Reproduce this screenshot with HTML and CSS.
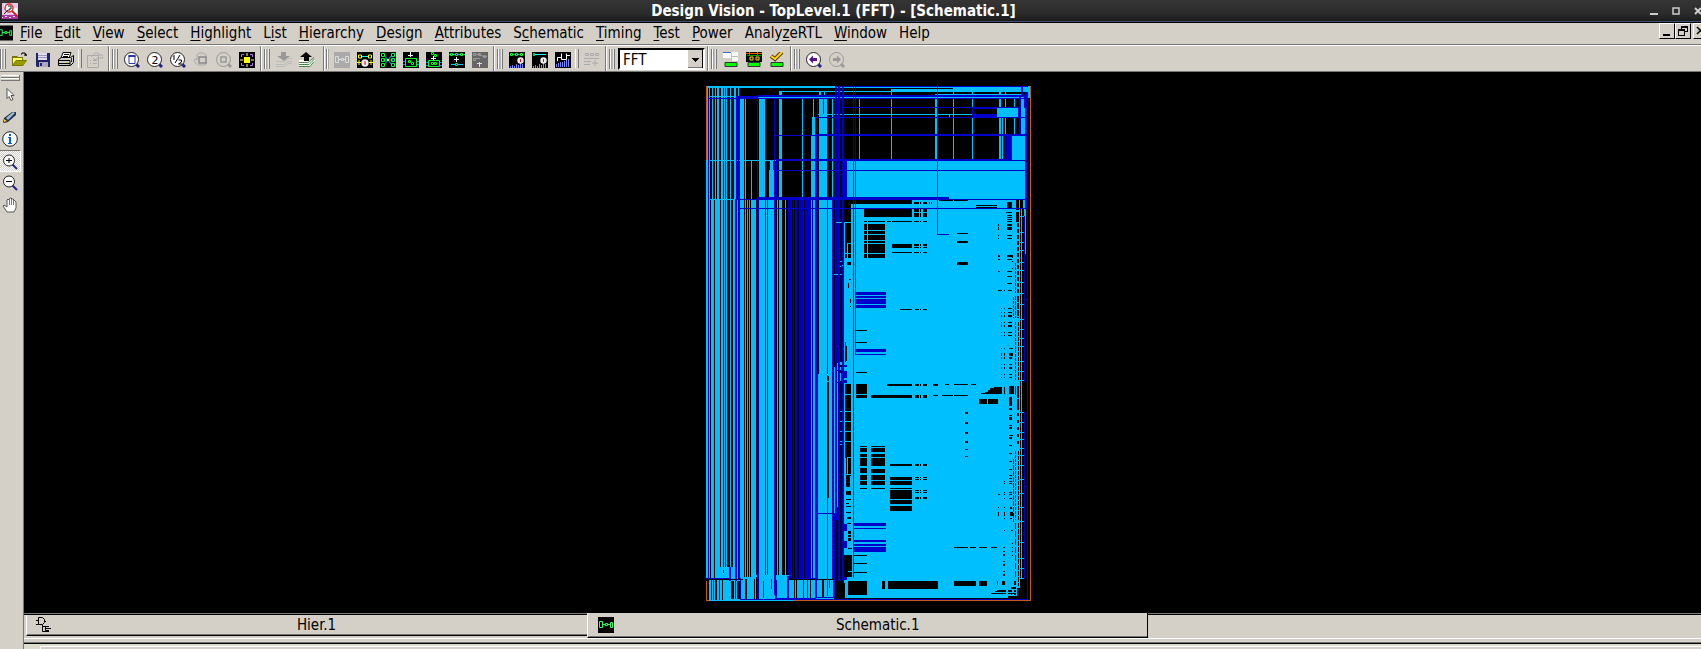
FILE: index.html
```html
<!DOCTYPE html>
<html lang="en">
<head>
<meta charset="utf-8">
<title>Design Vision - TopLevel.1 (FFT) - [Schematic.1]</title>
<link rel="stylesheet" href="styles.css">
</head>
<body>
<svg class="defs" aria-hidden="true">
  <symbol id="lens" viewBox="0 0 16 16"><path d="M11 11l4 4" stroke="#228" stroke-width="3"/><circle cx="7.5" cy="7.5" r="7" fill="#fff" stroke="#222"/></symbol>
  <symbol id="lens-off" viewBox="0 0 16 16"><path d="M12 12l3 3" stroke="#999" stroke-width="3"/><circle cx="7.5" cy="7.5" r="7" fill="none" stroke="#999"/></symbol>
  <symbol id="sch" viewBox="0 0 16 16"><path d="M0 0h16v16H0z"/><path d="M1.5 4.5h3v6h-3zM12.500 5.500h2v5h-2zM7.500 6.500h2v2h-2zM4.500 7.500h3m2 0h3" fill="none" stroke="#3f5"/></symbol>
  <symbol id="dial" viewBox="0 0 7 7"><circle cx="3.500" cy="3.500" r="3.200" fill="#eee"/><path d="M3 2h1v3H3z" fill="#d11"/></symbol>
  <symbol id="bars" viewBox="0 0 16 6"><path d="M1.500 6V4m2 2V3m2 3V4m2 2V2m2 4V3m2 3V1m2 5V2" stroke="#78f" fill="none"/></symbol>
</svg>

<header class="titlebar">
  <svg class="app-icon" viewBox="0 0 16 16"><path d="M0 0h16v16H0z" fill="#e8c8e8"/><path d="M0 12h16v4H0z" fill="#a3a"/><path d="M0 14h1v1H0zm3-1h2v1H3zm4 1h2v1H7zm4-1h2v1h-2z" fill="#fff"/><path d="M2 2h4v3H2zm8 3h5v6h-5z" fill="#fff"/><circle cx="7" cy="5" r="4" fill="#fff" stroke="#d33" stroke-width="1.500"/><path d="M10 8l5 5" stroke="#c22" stroke-width="2"/><path d="M6 3h3v3H7v2M2 11l4-4" fill="none" stroke="#222"/></svg>
  <h1>Design Vision - TopLevel.1 (FFT) - [Schematic.1]</h1>
  <div class="window-controls">
    <button aria-label="Minimize"><svg viewBox="0 0 10 10"><path d="M1 7h8v2H1z" fill="#ccc"/></svg></button>
    <button aria-label="Maximize"><svg viewBox="0 0 10 10"><path d="M2 2h6v6H2z" fill="none" stroke="#ccc" stroke-width="1.500"/></svg></button>
    <button aria-label="Close"><svg viewBox="0 0 10 10"><path d="M2 2l6 6m0-6l-6 6" stroke="#ccc" stroke-width="2"/></svg></button>
  </div>
</header>

<nav class="menubar">
  <svg class="doc-icon"><use href="#sch"/></svg>
  <button><u>F</u>ile</button><button><u>E</u>dit</button><button><u>V</u>iew</button><button><u>S</u>elect</button><button><u>H</u>ighlight</button><button>L<u>i</u>st</button><button><u>H</u>ierarchy</button><button><u>D</u>esign</button><button><u>A</u>ttributes</button><button>S<u>c</u>hematic</button><button><u>T</u>iming</button><button><u>T</u>est</button><button><u>P</u>ower</button><button>Analy<u>z</u>eRTL</button><button><u>W</u>indow</button><button>Help</button>
  <div class="mdi-controls">
    <button aria-label="Minimize document"><svg viewBox="0 0 12 12"><path d="M2 9h7v2H2z"/></svg></button>
    <button aria-label="Restore document"><svg viewBox="0 0 12 12"><path d="M4 1h7v6H8V6h2V3H5v1H4zM1 4h7v7H1zM2 6v4h5V6z" fill-rule="evenodd"/></svg></button>
    <button aria-label="Close document" class="mdi-close"><svg viewBox="0 0 12 12"><path d="M2 2l7 7m0-7l-7 7" stroke="#000" stroke-width="1.500"/></svg></button>
  </div>
</nav>

<div class="toolbar">
  <div class="group first">
    <i class="grip"></i>
    <button aria-label="Open"><svg viewBox="0 0 16 16"><path d="M0 4h5l1 1h5v3h4l-4 6H0z" fill="#770"/><path d="M1 6h9v2H4l-3 4z" fill="#ff6"/><path d="M4 9h11l-4 4H1z" fill="#990"/><path d="M9 2h1V1h3v1h1v2m-2-1h3" fill="none" stroke="#000"/></svg></button>
    <button aria-label="Save"><svg viewBox="0 0 16 16"><path d="M1 1h14v14H2l-1-1z" fill="#226"/><path d="M3 1h9v7H3z" fill="#dde"/><path d="M3 3h9v1H3zm0 2h9v1H3z" fill="#99b"/><path d="M4 10h9v5H4z" fill="#aab"/><path d="M5 11h2v3H5z" fill="#226"/></svg></button>
    <button aria-label="Print"><svg viewBox="0 0 16 16"><path d="M5 .5h8L11 6H3z" fill="#fff" stroke="#000"/><path d="M6 2.500h5M5 4.500h5" stroke="#000"/><path d="M.5 7.500l3-2h9l3-2v7l-3 3H.5z" fill="#ccc" stroke="#000"/><path d="M1 8.500h11M1 11.500h11m0-3v5" stroke="#000"/><path d="M8 10h2v1H8z" fill="#dd0"/><path d="M13 6h1v4h-1z" fill="#222"/></svg></button>
    <i class="sep"></i>
    <button aria-label="Properties" disabled><svg viewBox="0 0 16 16"><path d="M.5 3.500h11v12H.5zM3 8.500h1m2 0h4M3 11.500h1m2 0h4M4 5l4-4h3l1 2h4v3h-5L8 8 6 6" fill="none" stroke="#aaa"/></svg></button>
  </div>
  <div class="group">
    <i class="grip"></i>
    <button aria-label="Zoom full"><svg viewBox="0 0 16 16"><use href="#lens"/><path d="M5 3.500h6v8H5z" fill="#fff" stroke="#33a"/><path d="M4.500 3h7v2h-7z" fill="#33a"/></svg></button>
    <button aria-label="Zoom in 2x"><svg viewBox="0 0 16 16"><use href="#lens"/><text x="4.500" y="11.500" class="glyph">2</text></svg></button>
    <button aria-label="Zoom out 2x"><svg viewBox="0 0 16 16"><use href="#lens"/><path d="M3 4.500l1-1V8m1 3l5-8M8.500 8h3v2l-3 2h3.500" fill="none" stroke="#000"/></svg></button>
    <button aria-label="Pan" disabled><svg viewBox="0 0 16 16"><path d="M4 13L1 8l2-1 1 1V3l2-2 4 0 3 2v2M5 13h7l2-3" fill="none" stroke="#aaa"/><path d="M6 5h7v6H6z" fill="none" stroke="#888" stroke-width="1.500"/></svg></button>
    <button aria-label="Zoom selection" disabled><svg viewBox="0 0 16 16"><use href="#lens-off"/><path d="M5 5h5v5H5z" fill="none" stroke="#999" stroke-width="1.500"/></svg></button>
    <button aria-label="Zoom highlight"><svg viewBox="0 0 16 16"><path d="M0 0h16v16H0z"/><path d="M5 5h6v6H5z" fill="#ff0"/><path d="M2.500 5V2.500H5m6 0h2.500V5m0 6v2.500H11m-6 0H2.500V11" stroke="#b7e" fill="none"/><path d="M8 1v3m0 8v3M1 8h3m8 0h3" stroke="#ff8"/></svg></button>
  </div>
  <div class="group short">
    <i class="grip"></i>
    <button aria-label="Push down" disabled><svg viewBox="0 0 16 16"><path d="M5 0h5v4h4L8 9 1 4h4z" fill="#999"/><path d="M0 9.500h8l5-3h3M0 12.500h8l5-3h3M0 14.500h8l5-3h3" stroke="#bbb" fill="none"/></svg></button>
    <button aria-label="Pop up"><svg viewBox="0 0 16 16"><path d="M0 8h16v1l-5 6H0z" fill="#fff"/><path d="M5 9V5H1l6-5 6 5h-3v4z"/><path d="M0 10.500h9l6-5M0 12.500h10l5-5M0 14.500h11l4-5" stroke="#484" fill="none"/></svg></button>
  </div>
  <div class="group thin">
    <i class="grip"></i>
    <button aria-label="Schematic view" disabled><svg viewBox="0 0 16 16"><path d="M0 0h16v16H0z" fill="#aaa"/><path d="M1.500 4.500h3v6h-3zM11.500 4.500h3v6h-3zM7.500 6.500h2v2h-2zM4.500 7.500h3m2 0h2" fill="none" stroke="#ddd"/></svg></button>
    <button aria-label="Path schematic"><svg viewBox="0 0 16 16"><path d="M0 0h16v16H0z"/><path d="M4 4.500h8" stroke="#0ff"/><path d="M1.500 3h3v3h-3zm10 0h3v3h-3z" fill="none" stroke="#ff0"/><path d="M0 10.500h4m8 0h4M2 8v5m12-5v5" stroke="#ff0"/><use href="#dial" x="4" y="7" width="8" height="8"/></svg></button>
    <button aria-label="Fan-in and fan-out"><svg viewBox="0 0 16 16"><path d="M0 0h16v16H0z"/><path d="M4 3l8 10M4 13l8-10M3 8h10" stroke="#0bf"/><path d="M1.500 1.500h3v3h-3zm0 5h3v3h-3zm0 5h3v3h-3zm10-10h3v3h-3zm0 5h3v3h-3zm0 5h3v3h-3z" fill="none" stroke="#0f4"/><path d="M7 7h2v2H7z" fill="#ff0"/></svg></button>
    <button aria-label="Add logic inside"><svg viewBox="0 0 16 16"><path d="M0 0h16v16H0z"/><path d="M0 9.500h3m10 0h3M0 12.500h3m10 0h3" stroke="#08f"/><path d="M2.500 6.500h11v8h-11zM5.500 8.500h2v2h-2zm3 2h2v2h-2z" fill="none" stroke="#0f2"/><path d="M7 0h1v5H7zM5 3h5v1H5z" fill="#fff"/></svg></button>
    <button aria-label="Add hierarchy"><svg viewBox="0 0 16 16"><path d="M0 0h16v16H0z"/><path d="M0 10.500h3m10 0h3M0 13.500h3m10 0h3" stroke="#08f"/><path d="M5.500.5h2v2h-2zm3 2h2v2h-2zM2.500 8.500h11v6h-11zM5.500 10.500h2v2h-2zm3 0h2v2h-2z" fill="none" stroke="#0f2"/><path d="M7 4h1v4H7zM5 6h5v1H5z" fill="#fff"/></svg></button>
    <button aria-label="Expand path"><svg viewBox="0 0 16 16"><path d="M0 0h16v16H0z"/><path d="M0 2.500h16M2 12.500h12" stroke="#0cf"/><path d="M1.500 1.500h2v2h-2zm5 0h2v2h-2zm5 0h2v2h-2zm-5 10h2v2h-2z" stroke="#0f2"/><path d="M7 5h1v5H7zM5 7h5v1H5z" fill="#fff"/></svg></button>
    <button aria-label="Collapse path" disabled><svg viewBox="0 0 16 16"><path d="M0 0h16v16H0z" fill="#666"/><path d="M3 2.500h5l3 2h4M3 6.500h5M1.500 1.500h2v2h-2zm5 0h2v2h-2zm5 2h2v2h-2zm-10 3h2v2h-2z" fill="none" stroke="#999"/><path d="M7 10h1v5H7zM5 11h5v1H5z" fill="#ddd"/></svg></button>
  </div>
  <div class="group">
    <i class="grip"></i>
    <button aria-label="Path slack"><svg viewBox="0 0 16 16"><path d="M0 0h16v16H0z"/><path d="M2 2.500h12" stroke="#0c8"/><path d="M1.500 1.500h2v2h-2zm5 0h2v2h-2zm5 0h2v2h-2z" stroke="#0f2"/><use href="#bars" y="10" width="16" height="6"/><use href="#dial" x="8" y="5" width="7" height="7"/></svg></button>
    <button aria-label="Net capacitance"><svg viewBox="0 0 16 16"><path d="M0 0h16v16H0z"/><path d="M2 2.500h12" stroke="#0ff"/><path d="M1 1h2v3H1z" fill="#0c4"/><use href="#bars" y="10" width="16" height="6"/><use href="#dial" x="8" y="5" width="7" height="7"/></svg></button>
    <button aria-label="Endpoint slack"><svg viewBox="0 0 16 16"><path d="M0 0h16v16H0z"/><path d="M2.500 9V5.500h4v-4m0 2v4h5v-6m0 2H15" fill="none" stroke="#fff"/><path d="M1.500 15v-3m2 3v-4m2 4v-5m2 5v-5m2 5V9m2 6V8m2 7V7" stroke="#78f"/></svg></button>
    <i class="sep"></i>
    <button aria-label="Timing report" disabled><svg viewBox="0 0 16 16"><path d="M1.500 1.500h3v2h-3zm5 0h3v2h-3zm5 0h3v2h-3zM0 6.500h15M0 9.500h7M0 12.500h6M11 8v6m-3-3h6" fill="none" stroke="#aaa"/></svg></button>
  </div>
  <div class="group wide">
    <i class="grip"></i>
    <select class="design" aria-label="Design"><option>FFT</option></select>
  </div>
  <div class="group">
    <i class="grip"></i>
    <button aria-label="Layout view"><svg viewBox="0 0 16 16"><path d="M0 0h8v6H0zm8 0h7v9H9V5z" fill="#fff"/><path d="M0 0h8v1H0z" fill="#36d"/><path d="M9 4.500h6M8.500 1v8" stroke="#bbb"/><path d="M2 10.500h12v4H2z" fill="#0f0" stroke="#333"/></svg></button>
    <button aria-label="Layout nets"><svg viewBox="0 0 16 16"><path d="M0 0h16v10H0z"/><path d="M0 1.500h16M3.500 0v3m8-3v3" stroke="#e50"/><path d="M1 3.500h14" stroke="#090"/><path d="M4 5h3v3H4zm6 0h3v3h-3z" fill="none" stroke="#fd0"/><path d="M2 10.500h12v4H2z" fill="#0f0" stroke="#333"/></svg></button>
    <button aria-label="Check design"><svg viewBox="0 0 16 16"><path d="M2 4l4 3 7-7" fill="none" stroke="#630" stroke-width="4"/><path d="M2 4l4 3 7-7" fill="none" stroke="#fd0" stroke-width="2"/><path d="M2 10.500h12v4H2z" fill="#0f0" stroke="#333"/></svg></button>
  </div>
  <div class="group last">
    <i class="grip"></i>
    <button aria-label="Back"><svg viewBox="0 0 16 16"><use href="#lens"/><path d="M3 7.500l4-4V6h4v3H7v2.500z" fill="#518"/></svg></button>
    <button aria-label="Forward" disabled><svg viewBox="0 0 16 16"><use href="#lens-off"/><path d="M12 7.500l-4-4V6H4v3h4v2.500z" fill="#999"/></svg></button>
  </div>
</div>

<main class="workspace">
  <aside class="tools">
    <i class="grip-h"></i>
    <button aria-label="Select"><svg viewBox="0 0 16 16"><path d="M5 1.500v10l2-2 2 4 2-1-2-4h3z" fill="#fff" stroke="#555"/></svg></button>
    <button aria-label="Highlight"><svg viewBox="0 0 16 16"><path d="M1 13l1-4 8-6h4v3l-8 7-4 1z" fill="#234"/><path d="M4 9l7-6 2 1-7 7z" fill="#9bd"/><path d="M2 10l3 2-3 1z" fill="#fc3"/></svg></button>
    <button aria-label="Information"><svg viewBox="0 0 16 16"><circle cx="8" cy="8" r="7.300" fill="#fff" stroke="#222"/><path d="M7 3h2v2H7zM6 6h3v6h1v1H6v-1h1V7H6z" fill="#06c"/></svg></button>
    <button aria-label="Zoom in" class="active"><svg viewBox="0 0 16 16"><path d="M10 10l5 5" stroke="#228" stroke-width="2"/><circle cx="7" cy="6.500" r="5.500" fill="#fff" stroke="#222"/><path d="M4 6.500h6M7 4v5" stroke="#000"/></svg></button>
    <button aria-label="Zoom out"><svg viewBox="0 0 16 16"><path d="M10 10l5 5" stroke="#228" stroke-width="2"/><circle cx="7" cy="6.500" r="5.500" fill="#fff" stroke="#222"/><path d="M4 6.500h6" stroke="#000"/></svg></button>
    <button aria-label="Pan"><svg viewBox="0 0 16 16"><path d="M5 15L1 9l1-1 3 2V3l1-1 1 1 1-2h1l1 1 1 0 1 1 1 1 1 1v6l-2 4z" fill="#fff" stroke="#555"/><path d="M7.500 3v5m2-6v6m2-5v5" stroke="#777"/></svg></button>
  </aside>
  <section class="content">
    <div class="canvas"><svg id="schematic" class="schematic" viewBox="6 6 325 515" role="img" aria-label="FFT schematic"></svg></div>
    <div class="tabs">
      <button class="tab"><svg viewBox="0 0 16 16"><path d="M0 3.500h2m-2 4h2M2.500.5h4l2 2v3l-2 2h-4zM8 4.500h2M6.500 8v6.500H13M6.500 9.500H13M9.500 9.500v4H13M10 11.500h5" fill="none" stroke="#000"/></svg><span>Hier.1</span></button>
      <button class="tab current"><svg><use href="#sch"/></svg><span>Schematic.1</span></button>
      <div class="tab-rest"></div>
    </div>
    <footer class="status"><div class="status-panel"></div></footer>
  </section>
</main>
<script src="schematic.js"></script>
</body>
</html>
```

FILE: styles.css
```css
* { box-sizing: border-box; }

body {
  margin: 0;
  height: 100vh;
  display: flex;
  flex-direction: column;
  overflow: hidden;
  background: #d4d0c8;
  color: #000;
  font: 15px/20px "DejaVu Sans Condensed", "DejaVu Sans", sans-serif;
}

button {
  flex: none;
  margin: 0;
  padding: 0;
  border: 0;
  background: none;
  color: inherit;
  font: inherit;
}

svg { display: block; flex: none; width: 16px; height: 16px; }
.defs { position: absolute; width: 0; height: 0; }
.glyph { font: 11px "DejaVu Sans", sans-serif; }

.titlebar {
  flex: none;
  height: 23px;
  display: flex;
  align-items: center;
  padding-left: 2px;
  background: linear-gradient(#353535, #2c2c2c 60%, #1a1a1a);
  border-bottom: 1px solid #000;
  box-shadow: inset 0 -1px #3c5070;
}
.titlebar h1 {
  flex: 1;
  margin: 0;
  text-align: center;
  color: #fff;
  font: bold 15px/20px "DejaVu Sans Condensed", "DejaVu Sans", sans-serif;
}
.window-controls { display: flex; gap: 12px; margin-right: -2px; }
.window-controls svg { width: 10px; height: 10px; }

.menubar {
  flex: none;
  height: 22px;
  display: flex;
  align-items: flex-start;
  gap: 12px;
  border-bottom: 1px solid #777;
}
.menubar u { text-underline-offset: 2px; text-decoration-thickness: 1px; }
.doc-icon { width: 15px; height: 16px; margin: 2px -5px 0 -2px; }
.mdi-controls { display: flex; margin-left: auto; margin-right: -8px; }
.mdi-controls button {
  width: 16px;
  height: 16px;
  padding: 1px;
  border: 1px solid #000;
  border-top-color: #fff;
  border-left-color: #fff;
}
.mdi-controls svg { width: 12px; height: 12px; }
.mdi-controls .mdi-close { margin-left: 2px; }

.toolbar {
  flex: none;
  height: 27px;
  display: flex;
  border-top: 1px solid #fff;
  border-bottom: 1px solid #777;
}
.group {
  display: flex;
  align-items: center;
  padding: 0 1px 0 2px;
  border-left: 1px solid #fff;
  border-right: 1px solid #777;
}
.group.first { padding-left: 0; border-left: 0; }
.group.short { padding-right: 4px; }
.group.thin { padding-left: 1px; }
.group.wide { padding-right: 2px; }
.group.thin .grip { width: 3px; margin-right: 2px; border-right: 0; }
.group.last { border-right: 0; }
.group button { width: 23px; padding: 2px 4px 0 3px; }
.grip {
  width: 6px;
  height: 20px;
  margin-right: 3px;
  border: solid #777;
  border-width: 0 1px;
  background: linear-gradient(90deg, #fff 1px, #d4d0c8 1px, #777 2px, #fff 3px, #d4d0c8 4px);
}
.sep { width: 6px; height: 19px; border-left: 1px solid #fff; box-shadow: inset 2px 0 #d4d0c8, inset 3px 0 #777; }
.design {
  appearance: none;
  width: 87px;
  height: 22px;
  padding: 0 3px;
  border: 2px solid #fff;
  border-top-color: #000;
  border-left-color: #000;
  border-radius: 0;
  color: #000;
  font: inherit;
  background:
    linear-gradient(#000, #000) right 7px top 11px / 1px 1px no-repeat,
    linear-gradient(#000, #000) right 6px top 10px / 3px 1px no-repeat,
    linear-gradient(#000, #000) right 5px top 9px / 5px 1px no-repeat,
    linear-gradient(#000, #000) right 4px top 8px / 7px 1px no-repeat,
    linear-gradient(#000, #000) right / 1px 100% no-repeat,
    linear-gradient(#777, #777) bottom right / 15px 1px no-repeat,
    linear-gradient(#d4d0c8, #d4d0c8) right / 15px 100% no-repeat,
    #fff;
}

.workspace { flex: 1; min-height: 0; display: flex; }
.tools {
  flex: none;
  width: 24px;
  padding-top: 3px;
  border-right: 1px solid #777;
}
.grip-h {
  display: block;
  width: 19px;
  height: 6px;
  margin: 0 0 3px 1px;
  border: solid #777;
  border-width: 0 1px 1px 0;
  background: linear-gradient(#fff 1px, #d4d0c8 1px, #d4d0c8 2px, #777 2px, #777 3px, #fff 3px, #fff 4px, #d4d0c8 4px);
}
.tools button { display: block; width: 21px; height: 22px; padding: 3px 3px 3px 2px; }
.tools .active {
  border-top: 1px solid #777;
  border-bottom: 1px solid #fff;
  border-right: 1px solid #fff;
  padding: 3px 2px 1px;
  background: repeating-conic-gradient(#fff 0 25%, #d4d0c8 0 50%) 0 0 / 2px 2px;
}

.content { flex: 1; min-width: 0; display: flex; flex-direction: column; }
.canvas {
  flex: 1;
  min-height: 0;
  display: flex;
  align-items: center;
  justify-content: center;
  padding: 2px 0 0 12px;
  background: #000;
}
.schematic { width: 325px; height: 515px; shape-rendering: crispEdges; }

.tabs { flex: none; height: 25px; display: flex; padding-left: 2px; box-shadow: inset 0 1px #777, inset 0 2px #000; }
.tab {
  width: 33.5%;
  height: 21px;
  display: flex;
  align-items: center;
  margin-top: 2px;
  padding: 0 6px 0 9px;
  border-left: 1px solid #fff;
  border-bottom: 1px solid #000;
  box-shadow: inset 0 -1px #777;
}
.tab span { flex: 1; text-align: center; }
.tab.current {
  margin-top: 0;
  height: 25px;
  padding-left: 10px;
  background: #d4d0c8;
  border-right: 1px solid #000;
}
.tab-rest { flex: 1; }
.status {
  flex: none;
  height: 11px;
  padding: 7px 0 0 16px;
  border-top: 1px solid #fff;
  background: linear-gradient(#d4d0c8 3px, #777 3px, #777 4px, #000 4px, #000 5px, #dcdccc 5px);
}
.status-panel { height: 3px; border-top: 1px solid #fff; border-left: 1px solid #fff; background: #d4d0c8; }
```

FILE: schematic.js
```js
// Layers are painted in order. "cols" holds x,width pairs sharing a vertical span;
// "rects" holds x,y,width,height quadruples; "dash" holds x,width,top,bottom,on,off.
const CYAN = '#00bfff', BLUE = '#0000cd', BLACK = '#000', ORANGE = '#c8581c';
const layers = [
  // upper buses
  { c: CYAN, y: 6, h: 113, cols: '7 1 9 1 12 1 15 1 17 2 21 2 24 1 26 1 30 1 34 2 38 1' },
  { c: CYAN, y: 18, h: 101, cols: '40 4 45 1 59 6 102 1 119 8 132 1' },
  { c: CYAN, rects: '79 11 3 108 80 11 1 6 113 19 1 18 112 37 3 82 111 55 4 64 119 11 2 10 124 11 1 10 159 18 1 62 51 80 1 39 70 80 3 10 69 90 5 29 6 80 2 40' },
  { c: BLACK, rects: '123 16 1 18' },
  // lower buses
  { c: CYAN, y: 119, h: 380, cols: '6 2 9 1 11 3 15 5 21 2 24 1 26 1 30 1 33 2 37 1 40 4 45 1 47 1 49 1 51 5 59 6 66 1 68 6 77 1 79 3 85 1 111 1 113 2 119 8 129 3' },
  { c: CYAN, rects: '118 294 9 205 127 294 2 1 127 301 2 1 128 119 1 380 144 143 1 360' },
  { c: BLACK, rects: '127 296 2 5 127 302 2 116' },
  // cell array
  { c: CYAN, rects: '147 81 178 38 151 119 169 59 145 178 175 340' },
  { c: BLACK, rects: '144 88 3 2 151 119 13 5' },
  { c: BLACK, rects: '141 120 6 23 147 129 4 120 141 145 3 117 145 145 2 17 148 164 3 10 164 129 28 8 145 262 1 20 145 304 6 74 146 377 5 19' },
  { c: CYAN, rects: '138 142 13 1 151 124 13 54 144 143 1 120 147 163 4 1 147 163 1 15 144 173 7 1 144 178 7 4 141 181 4 1 134 194 13 1 144 208 6 1 147 185 4 180 144 314 7 1 140 331 11 1 140 341 11 1 140 351 11 1 140 361 11 1 138 364 8 1 147 377 4 1 147 377 1 20 143 394 8 1 145 417 6 1' },
  { c: BLACK, rects: '149 199 2 1 148 203 1 5 150 219 1 4 150 226 1 1 145 266 2 15 145 304 6 10 146 315 5 16 146 332 5 9 146 342 5 9 146 352 5 9 145 362 6 14 148 378 3 15 146 395 4 12 146 411 5 4 146 419 5 1 146 423 3 1 146 426 5 1 146 432 5 1 147 437 4 2 147 443 4 1 148 451 3 3 148 455 3 2 148 458 3 3 148 468 4 1 144 475 4 22 148 475 4 16 148 492 4 5 140 380 1 118' },
  // upper left holes of the array
  { c: BLACK, rects: '160 120 52 4 214 122 5 2 220 122 1 2 223 122 4 2 164 129 21 8 187 129 4 8 192 129 20 8 214 129 5 3 220 129 1 3 223 129 4 3 214 133 5 4 220 133 1 4 223 133 4 4 164 141 3 1 168 141 17 1 187 141 4 1 192 141 20 1 214 141 5 1 220 141 1 1 223 141 4 1' },
  { c: BLACK, rects: '164 144 3 6 168 144 17 6 164 151 3 3 168 151 17 3 164 155 3 5 168 155 17 5 164 161 3 2 168 161 17 2 164 164 3 9 168 164 17 9 164 174 3 4 168 174 17 4 192 164 20 4 192 172 20 1 214 164 5 2 220 164 1 2 223 164 4 2 214 167 5 1 220 167 1 1 223 167 4 1 214 172 5 1 220 172 1 1 223 172 4 1' },
  { c: BLACK, rects: '257 153 11 1 257 161 11 2 257 182 11 3 239 120 14 1 254 120 14 1 229 122 1 2 231 122 1 2 276 125 21 1 276 127 21 1 307 122 5 6 306 132 6 1 316 120 3 10 316 132 3 10 200 229 12 1 215 229 4 1 220 229 1 1 223 229 4 1 156 250 11 1 156 262 11 1 156 292 11 1' },
  // middle and lower holes
  { c: BLACK, rects: '156 304 11 10 156 315 11 3 171 315 41 3 187 304 25 2 215 304 4 2 220 304 1 2 223 304 4 2 215 315 4 3 220 315 1 3 223 315 4 3 233 304 5 2 245 304 4 1 254 304 14 1 271 304 5 1 233 315 5 1 242 315 11 1 254 315 14 1 281 313 5 1 285 312 3 2 288 310 4 4 290 308 4 6 294 307 8 7 304 307 1 7 309 306 5 8 279 319 8 5 288 319 10 5' },
  { c: BLACK, rects: '265 332 3 2 265 342 3 2 265 352 3 2 265 361 3 2 265 369 3 1 265 376 3 1 160 366 7 1 171 366 14 1 160 368 7 4 171 368 14 4 160 374 7 3 171 374 14 3 160 378 7 8 171 378 14 8 160 388 7 5 171 389 14 4 160 395 7 5 171 395 14 5 160 401 7 4 171 401 14 4 160 408 7 1 171 408 14 1' },
  { c: BLACK, rects: '190 384 22 2 215 384 4 2 220 384 1 2 223 384 4 2 190 397 22 3 190 401 22 4 190 408 22 1 190 410 22 9 190 420 22 4 190 426 22 5 215 397 4 1 220 397 1 1 223 397 4 1 215 399 4 1 220 399 1 1 223 399 4 1 215 410 4 1 220 410 1 1 223 410 4 1 215 412 4 1 220 412 1 1 223 412 4 1 215 417 4 2 220 417 1 2 223 417 4 2' },
  { c: BLACK, rects: '154 475 13 1 154 483 13 1 154 492 13 1 148 501 19 14 182 501 3 8 188 501 50 8 254 501 22 5 279 501 8 5 297 501 1 4 302 501 3 4 314 501 2 4 254 467 14 1 270 467 6 1 279 467 8 1 291 467 6 1 297 510 9 1 308 510 3 1 295 511 11 1 308 511 3 1 291 513 15 1 308 513 8 1 311 507 5 2 308 516 16 3' },
  // cell pin columns at the right edge
  { c: BLACK, rects: '307 135 5 1 307 137 5 1 307 139 5 1 307 141 5 1 307 144 5 2 307 147 5 3 307 155 5 1 307 158 5 1 307 175 5 2 307 179 5 1 307 191 5 1 307 196 5 1 307 203 5 1 298 144 1 2 298 147 1 3 298 155 1 1 298 158 1 1 298 175 2 2 298 179 2 1 298 191 2 1 298 210 4 1 304 210 1 1 308 210 4 1 312 175 1 3 312 181 1 1 312 188 1 1' },
  { c: BLACK, rects: '301 228 1 1 304 228 1 1 308 228 4 1 301 232 1 1 304 232 1 1 308 232 4 1 301 235 1 2 304 235 1 2 308 235 4 2 301 242 1 1 304 242 1 1 308 242 4 1 301 245 1 2 304 245 1 2 308 245 4 2 301 252 1 1 304 252 1 1 308 252 4 1 301 255 1 1 304 255 1 1 308 255 4 1 301 268 1 1 304 268 1 1 309 268 4 1 301 273 1 3 304 273 1 3 309 273 4 3 301 277 1 2 304 277 1 2 309 277 3 2 301 284 1 1 304 284 1 1 309 284 3 1 301 287 1 2 304 287 1 2 309 287 3 2 301 294 1 1 304 294 1 1 309 294 3 1 301 297 1 1 304 297 1 1 309 297 3 1' },
  { c: BLACK, rects: '309 317 3 9 309 328 3 2 309 335 3 1 309 337 3 3 309 345 3 1 309 347 3 2 309 355 4 1 309 357 3 2 309 365 3 1 309 373 3 1 309 381 3 1 309 389 3 1 309 395 3 1 309 398 3 1 309 401 3 1 309 403 3 1 304 401 1 1 304 403 1 1 298 414 2 1 304 412 1 1 304 414 1 1 309 412 3 1 309 414 3 1 304 418 1 1 309 418 3 1 298 427 1 1 304 427 1 1 298 432 1 4 304 432 1 4 310 427 2 2 310 432 3 4 304 438 1 1 310 438 2 1 304 450 1 1 311 450 2 1 303 467 2 1 303 471 2 1 303 474 2 2 303 481 2 1 303 484 2 2 303 491 2 1 303 494 2 2' },
  { c: BLACK, dash: '315 1 183 213 3 1 317 2 143 213 4 2 313 1 217 238 3 1 315 1 216 238 4 1 317 2 216 238 6 1 315 1 242 300 3 1 318 1 242 300 4 1 315 1 306 315 9 1 317 2 306 330 12 1 317 2 333 365 3 4 315 1 371 440 3 1 318 1 371 440 4 1 313 1 379 442 5 1 315 1 443 498 6 2 318 1 443 506 5 1 311 1 507 517 2 1 314 2 507 517 2 1 312 1 463 477 1 3' },
  { c: BLACK, rects: '320 119 11 400' },
  { c: CYAN, rects: '321 129 1 388 323 119 2 10 324 128 2 46' },
  { c: CYAN, rects: '320 136 4 1 320 152 4 1 320 162 4 1 320 170 4 1 320 182 4 1 320 190 4 1 320 202 4 1 320 213 4 1 320 224 4 1 320 239 4 1 320 249 4 1 320 258 4 1 320 266 4 1 320 281 4 1 320 291 4 1 320 300 4 1 320 332 4 1 320 342 4 1 320 352 4 1 320 359 4 1 320 368 4 1 320 375 4 1 320 385 4 1 320 399 4 1 320 413 4 1 320 427 4 1 320 441 4 1 320 462 4 1 320 478 4 1 320 488 4 1 320 498 4 1' },
  { c: BLACK, rects: '320 499 5 20 317 508 4 11' },
  // upper right nets
  { c: CYAN, rects: '7 6 128 2 135 7 192 1 191 9 130 3 253 8 68 4 79 11 112 1 235 14 86 1 8 16 28 1 40 17 290 1 117 34 155 1 191 12 1 70 235 14 2 66 253 12 1 70 272 12 1 70 299 12 2 68 302 37 1 44 305 12 1 44 314 18 1 38 249 34 1 3 297 28 21 9 321 18 4 37 312 56 13 24 8 80 68 1 10 119 25 1 323 7 7 5 328 6 2 11 326 24 1 8' },
  { c: BLUE, rects: '135 6 192 1 57 15 268 2 36 16 21 2 8 18 320 1 144 27 175 1 272 27 25 2 272 34 25 3 272 27 1 10 115 37 212 1 115 54 212 2 74 55 41 1 76 79 235 2 305 56 7 24 311 80 13 1 74 90 251 1 57 117 192 2 57 119 268 1 36 119 21 1 142 79 5 39 38 128 289 1 237 7 1 147 237 154 12 1 321 7 2 9 319 16 2 39 318 27 1 10 324 16 1 12 325 12 3 43 325 55 1 74 326 46 2 83 322 54 5 1 326 32 1 30' },
  { c: BLUE, rects: '8 16 1 482 36 16 1 104 38 16 1 104 57 16 1 101 74 18 1 101 76 79 1 38 115 37 1 82 116 54 2 65 117 18 1 36 133 18 1 101' },
  { c: BLUE, y: 6, h: 200, cols: '135 2 138 2 142 2 153 1 155 1' },
  // control nets
  { c: BLUE, y: 119, h: 379, cols: '35 2 38 1 57 2 74 2 88 1 90 2 93 1 95 2 99 2 102 2 105 2 108 3 112 1 115 3 132 2 142 2 153 1' },
  { c: BLUE, rects: '135 119 2 310 138 119 2 380 155 119 1 156' },
  { c: CYAN, rects: '134 287 1 146 137 283 1 144 140 181 2 1 140 185 3 1 140 186 1 1 140 282 2 3 140 287 1 4 140 293 1 8 134 194 4 1 136 142 6 1' },
  { c: BLUE, rects: '136 265 2 2 137 290 5 1 136 302 5 1 139 362 3 1 137 427 2 1 140 185 2 1' },
  { c: BLUE, rects: '156 212 30 3 156 216 30 2 156 219 30 5 156 225 30 3 156 269 30 3 155 274 31 1 154 443 32 3 154 448 32 1 154 460 32 2 154 464 32 2 154 467 32 5 143 285 4 2 142 291 5 7 142 300 5 3 142 444 5 7 142 461 5 7 142 497 5 3 118 433 18 1 136 428 1 12 324 136 1 166 324 332 1 167 327 129 1 391 325 219 3 1 325 406 3 1' },
  // bottom edge
  { c: CYAN, rects: '20 487 13 12 43 497 30 4 55 495 34 6 73 495 16 6 9 500 125 20' },
  { c: BLACK, rects: '23 490 1 3 6 500 3 20 11 500 1 20 13 500 1 20 15 500 2 20 19 500 1 20 22 500 1 20 31 501 3 18 35 501 1 18 37 501 3 18 45 499 2 20 54 499 1 20 56 497 1 22 63 501 1 17 71 499 1 10 75 501 1 18 94 500 1 18 96 500 1 18 103 500 1 18 107 500 1 18 110 500 1 18 122 500 2 18 129 500 1 8 78 519 249 1 134 518 193 1 136 500 2 18 138 500 1 18 142 500 1 18' },
  { c: BLUE, rects: '6 498 24 1 29 487 2 14 35 493 2 8 40 498 1 21 57 495 2 24 74 495 2 20 76 500 1 19 87 496 2 22 115 498 2 20 127 418 1 98 133 433 2 85 76 518 40 1 116 517 18 1 40 519 287 1 93 498 22 1 138 499 3 2' },
  { c: ORANGE, rects: '6 6 1 74 6 501 1 20 6 520 325 1 330 6 1 515' },
  { c: CYAN, rects: '9 520 85 1 328 6 2 11' }
];

const svg = document.getElementById('schematic');
const numbers = text => text.split(' ').map(Number);
const box = (x, y, w, h) => `M${x} ${y}h${w}v${h}h${-w}z`;

for (const layer of layers) {
  let d = '';
  if (layer.cols) {
    const n = numbers(layer.cols);
    for (let i = 0; i < n.length; i += 2) d += box(n[i], layer.y, n[i + 1], layer.h);
  }
  if (layer.rects) {
    const n = numbers(layer.rects);
    for (let i = 0; i < n.length; i += 4) d += box(n[i], n[i + 1], n[i + 2], n[i + 3]);
  }
  if (layer.dash) {
    const n = numbers(layer.dash);
    for (let i = 0; i < n.length; i += 6) {
      const [x, w, top, bottom, on, off] = n.slice(i, i + 6);
      for (let y = top; y < bottom; y += on + off) d += box(x, y, w, Math.min(on, bottom - y));
    }
  }
  const path = document.createElementNS('http://www.w3.org/2000/svg', 'path');
  path.setAttribute('d', d);
  path.setAttribute('fill', layer.c);
  svg.append(path);
}
```
